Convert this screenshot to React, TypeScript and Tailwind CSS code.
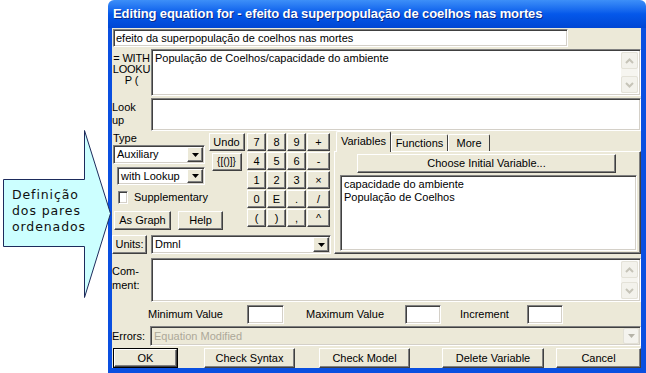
import React from 'react';

const raised =
  'bg-[#ece9d8] border border-t-white border-l-white border-r-[#404040] border-b-[#404040] shadow-[inset_-1px_-1px_0_#808080]';
const sunken =
  'border border-t-[#808080] border-l-[#808080] border-r-white border-b-white shadow-[inset_1px_1px_0_#404040,inset_-1px_-1px_0_#d4d0c8]';

function Btn({ label, className = '' }: { label: string; className?: string }) {
  return (
    <div className={`${raised} flex items-center justify-center leading-none shrink-0 ${className}`}>{label}</div>
  );
}

function DropBtn({ disabled = false }: { disabled?: boolean }) {
  return (
    <div
      className={`${
        disabled ? 'bg-[#f4f3ee] border border-[#e2e0d6] rounded-[2px]' : raised
      } w-[16px] h-full flex items-center justify-center shrink-0`}
    >
      <svg width="7" height="4" viewBox="0 0 7 4">
        <path d="M0 0h7L3.5 4z" fill={disabled ? '#b5b3a8' : '#000'} />
      </svg>
    </div>
  );
}

function Select({ value, className = '', disabled = false }: { value: string; className?: string; disabled?: boolean }) {
  return (
    <div
      className={`${sunken} ${disabled ? 'bg-[#ece9d8] text-[#aca899]' : 'bg-white'} flex items-stretch p-[1px] shrink-0 ${className}`}
    >
      <span className="flex-1 pl-[2px] flex items-center truncate text-[11px]">{value}</span>
      <DropBtn disabled={disabled} />
    </div>
  );
}

function ScrollBtn({ dir }: { dir: 'up' | 'down' }) {
  return (
    <div className="h-[17px] rounded-[2px] border border-[#e4e2d8] bg-[#f3f2ec] flex items-center justify-center">
      <svg width="9" height="6" viewBox="0 0 9 6">
        <path
          d={dir === 'up' ? 'M1 5L4.5 1.5L8 5' : 'M1 1L4.5 4.5L8 1'}
          stroke="#c6c4b8"
          strokeWidth="2"
          fill="none"
        />
      </svg>
    </div>
  );
}

function ScrollCol() {
  return (
    <div className="w-[17px] flex flex-col bg-[#f6f5f0] shrink-0">
      <ScrollBtn dir="up" />
      <div className="flex-1" />
      <ScrollBtn dir="down" />
    </div>
  );
}

function Key({ label, w = 'w-[19px]' }: { label: string; w?: string }) {
  return <Btn label={label} className={`${w} h-[18px] text-[11px]`} />;
}

function Callout() {
  return (
    <div className="relative w-[108px] h-full shrink-0">
      <svg className="absolute left-0 top-0 overflow-visible" width="112" height="373">
        <path
          d="M3.5 179.5H84.5V130.5L110.5 213.5L84.5 297.5V246.5H3.5Z"
          fill="#ccffff"
          stroke="#1d2b5c"
          strokeWidth="1"
        />
      </svg>
      <div className="absolute left-[12px] top-[187px] font-['DejaVu_Sans',sans-serif] text-[12.5px] leading-[16px] tracking-[0.9px] text-[#101010]">
        <div>Definição</div>
        <div>dos pares</div>
        <div>ordenados</div>
      </div>
    </div>
  );
}

export default function App() {
  const digits = [
    ['7', '8', '9', '+'],
    ['4', '5', '6', '-'],
    ['1', '2', '3', '×'],
    ['0', 'E', '.', '/'],
    ['(', ')', ',', '^'],
  ];

  return (
    <div className="w-[646px] h-[373px] bg-white flex overflow-hidden font-['Liberation_Sans',Arial,sans-serif] text-[11px] text-black">
      <Callout />

      <div className="w-[538px] h-[373px] flex flex-col shrink-0">
        {/* title bar */}
        <div className="h-[28px] shrink-0 rounded-t-[6px] bg-linear-to-b from-[#3d8ff8] via-[#0558ea] to-[#0046d4] flex items-center pl-[5px]">
          <span className="text-white font-bold text-[13px] tracking-[-0.1px] [text-shadow:1px_1px_0_#0a2a8a]">
            Editing equation for - efeito da superpopulação de coelhos nas mortes
          </span>
        </div>

        <div className="flex-1 flex flex-col bg-[#ece9d8] border-l-[4px] border-r-[5px] border-b-[5px] border-[#0a4fe0]">
          {/* name */}
          <div className="mt-[1px] h-[18px] flex">
            <div className={`${sunken} bg-white w-[455px] ml-[1px] flex items-center pl-[2px]`}>
              efeito da superpopulação de coelhos nas mortes
            </div>
          </div>

          {/* equation */}
          <div className="mt-[2px] h-[47px] flex">
            <div className="w-[39px] pt-[4px] text-center leading-[11px] whitespace-nowrap tracking-[-0.2px]">
              <div>= WITH</div>
              <div>LOOKU</div>
              <div>P (</div>
            </div>
            <div className={`${sunken} bg-white flex-1 flex p-[2px]`}>
              <div className="flex-1 pl-[1px] leading-[13px]">População de Coelhos/capacidade do ambiente</div>
              <ScrollCol />
            </div>
          </div>

          {/* lookup */}
          <div className="mt-[2px] h-[33px] flex">
            <div className="w-[39px] pt-[3px] leading-[13px]">
              <div>Look</div>
              <div>up</div>
            </div>
            <div className={`${sunken} bg-white flex-1`} />
          </div>

          {/* middle */}
          <div className="h-[124px] flex">
            <div className="w-[222px] flex flex-col shrink-0">
              <div className="h-[104px] flex">
                <div className="w-[96px] flex flex-col shrink-0">
                  <div className="h-[14px] pl-[1px] leading-[14px]">Type</div>
                  <Select value="Auxiliary" className="w-[92px] h-[19px] ml-[1px]" />
                  <Select value="with Lookup" className="w-[88px] h-[18px] ml-[5px] mt-[3px]" />
                  <div className="mt-[5px] h-[14px] flex items-center ml-[6px]">
                    <div className={`${sunken} bg-white w-[13px] h-[13px]`} />
                    <span className="ml-[6px]">Supplementary</span>
                  </div>
                  <div className="mt-[7px] h-[19px] flex ml-[2px]">
                    <Btn label="As Graph" className="w-[57px] h-[19px]" />
                    <Btn label="Help" className="w-[45px] h-[19px] ml-[7px]" />
                  </div>
                </div>

                <div className="mt-[2px] flex">
                  <div className="w-[37px] flex flex-col items-center gap-[2px] shrink-0">
                    <Btn label="Undo" className="w-[36px] h-[18px]" />
                    <Btn label="{[()]}" className="w-[30px] h-[18px] text-[10px]" />
                  </div>
                  <div className="ml-[2px] flex flex-col gap-[1px]">
                    {digits.map((row, i) => (
                      <div key={i} className="flex gap-[1px]">
                        {row.map((d, j) => (
                          <Key key={d} label={d} w={j === 3 ? 'w-[23px]' : 'w-[19px]'} />
                        ))}
                      </div>
                    ))}
                  </div>
                </div>
              </div>

              <div className="h-[19px] flex">
                <Btn label="Units:" className="w-[35px] h-[19px]" />
                <Select value="Dmnl" className="w-[180px] h-[19px] ml-[4px]" />
              </div>
            </div>

            {/* tabs */}
            <div className="flex-1 flex flex-col">
              <div className="h-[20px] flex items-end pl-[2px]">
                <div className="relative z-10 w-[55px] h-[21px] -mb-px bg-[#ece9d8] border border-b-0 border-t-white border-l-white border-r-[#404040] rounded-t-[2px] flex items-center justify-center pb-[2px]">
                  Variables
                </div>
                <div className="w-[57px] h-[17px] bg-[#ece9d8] border border-b-0 border-t-white border-l-white border-r-[#404040] rounded-t-[2px] flex items-center justify-center">
                  Functions
                </div>
                <div className="w-[42px] h-[17px] bg-[#ece9d8] border border-b-0 border-t-white border-l-white border-r-[#404040] rounded-t-[2px] flex items-center justify-center">
                  More
                </div>
              </div>
              <div className="h-[103px] border border-t-white border-l-white border-r-[#404040] border-b-[#404040] shadow-[inset_-1px_-1px_0_#808080] flex flex-col">
                <Btn label="Choose Initial Variable..." className="ml-[22px] mt-[2px] w-[259px] h-[19px]" />
                <div className={`${sunken} bg-white ml-[5px] mt-[2px] w-[297px] h-[76px] pl-[3px] pt-[2px] leading-[13px]`}>
                  <div>capacidade do ambiente</div>
                  <div>População de Coelhos</div>
                </div>
              </div>
            </div>
          </div>

          {/* comment */}
          <div className="mt-[3px] h-[44px] flex">
            <div className="w-[39px] pt-[6px] leading-[14px]">
              <div>Com-</div>
              <div>ment:</div>
            </div>
            <div className={`${sunken} bg-white flex-1 flex justify-end p-[2px]`}>
              <ScrollCol />
            </div>
          </div>

          {/* min / max */}
          <div className="mt-[3px] h-[19px] flex items-center">
            <span className="ml-[36px] w-[99px]">Minimum Value</span>
            <div className={`${sunken} bg-white w-[37px] h-[19px]`} />
            <span className="ml-[22px] w-[99px]">Maximum Value</span>
            <div className={`${sunken} bg-white w-[36px] h-[19px]`} />
            <span className="ml-[19px] w-[67px]">Increment</span>
            <div className={`${sunken} bg-white w-[36px] h-[19px]`} />
          </div>

          {/* errors */}
          <div className="mt-[2px] h-[20px] flex items-center">
            <span className="w-[38px]">Errors:</span>
            <Select value="Equation Modified" disabled className="flex-1 h-[20px]" />
          </div>

          {/* buttons */}
          <div className="mt-[2px] h-[20px] flex">
            <div className="ml-[1px] w-[66px] h-[20px] border border-black flex">
              <Btn label="OK" className="flex-1 h-full" />
            </div>
            <Btn label="Check Syntax" className="ml-[26px] w-[91px] h-[20px]" />
            <Btn label="Check Model" className="ml-[24px] w-[91px] h-[20px]" />
            <Btn label="Delete Variable" className="ml-[32px] w-[102px] h-[20px]" />
            <Btn label="Cancel" className="ml-[12px] w-[85px] h-[20px]" />
          </div>
        </div>
      </div>
    </div>
  );
}
